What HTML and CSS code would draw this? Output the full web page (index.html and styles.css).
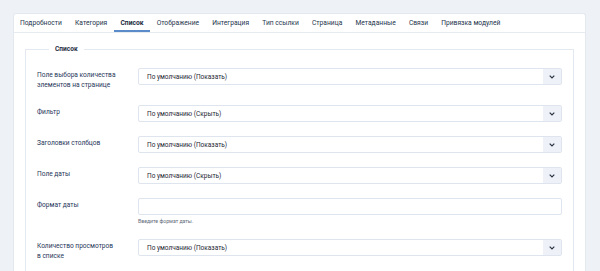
FILE: index.html
```html
<!DOCTYPE html>
<html lang="ru">
<head>
    <meta charset="UTF-8">
    <title>Список</title>
    <link rel="stylesheet" href="styles.css">
</head>
<body>
    <div class="panel">
        <ul class="tabs">
            <li>Подробности</li>
            <li>Категория</li>
            <li class="active">Список</li>
            <li>Отображение</li>
            <li>Интеграция</li>
            <li>Тип ссылки</li>
            <li>Страница</li>
            <li>Метаданные</li>
            <li>Связи</li>
            <li>Привязка модулей</li>
        </ul>
        <div class="tab-body">
            <fieldset class="group">
                <legend>Список</legend>
                <div class="row first">
                    <label class="lbl">Поле выбора количества<br>элементов на странице</label>
                    <div class="ctrl"><div class="select"><span>По умолчанию (Показать)</span><i class="caret"><svg width="6" height="4" viewBox="0 0 6 4"><path d="M0.7 0.7l2.3 2.3 2.3-2.3" fill="none" stroke="#2b3440" stroke-width="1.2"/></svg></i></div></div>
                </div>
                <div class="row">
                    <label class="lbl">Фильтр</label>
                    <div class="ctrl"><div class="select"><span>По умолчанию (Скрыть)</span><i class="caret"><svg width="6" height="4" viewBox="0 0 6 4"><path d="M0.7 0.7l2.3 2.3 2.3-2.3" fill="none" stroke="#2b3440" stroke-width="1.2"/></svg></i></div></div>
                </div>
                <div class="row">
                    <label class="lbl">Заголовки столбцов</label>
                    <div class="ctrl"><div class="select"><span>По умолчанию (Показать)</span><i class="caret"><svg width="6" height="4" viewBox="0 0 6 4"><path d="M0.7 0.7l2.3 2.3 2.3-2.3" fill="none" stroke="#2b3440" stroke-width="1.2"/></svg></i></div></div>
                </div>
                <div class="row">
                    <label class="lbl">Поле даты</label>
                    <div class="ctrl"><div class="select"><span>По умолчанию (Скрыть)</span><i class="caret"><svg width="6" height="4" viewBox="0 0 6 4"><path d="M0.7 0.7l2.3 2.3 2.3-2.3" fill="none" stroke="#2b3440" stroke-width="1.2"/></svg></i></div></div>
                </div>
                <div class="row">
                    <label class="lbl">Формат даты</label>
                    <div class="ctrl">
                        <div class="input"></div>
                        <small class="hint">Введите формат даты.</small>
                    </div>
                </div>
                <div class="row">
                    <label class="lbl">Количество просмотров<br>в списке</label>
                    <div class="ctrl"><div class="select"><span>По умолчанию (Показать)</span><i class="caret"><svg width="6" height="4" viewBox="0 0 6 4"><path d="M0.7 0.7l2.3 2.3 2.3-2.3" fill="none" stroke="#2b3440" stroke-width="1.2"/></svg></i></div></div>
                </div>
            </fieldset>
        </div>
    </div>
</body>
</html>
```

FILE: styles.css
```css
body { margin: 0; padding: 13px 14px 0 13px; background: #eef2f7; font-family: Roboto, "Liberation Sans", sans-serif; color: #22324a; height: 258px; overflow: hidden; }
.panel { background: #fff; border: 1px solid #e4e9f0; border-bottom: none; border-radius: 3px 3px 0 0; height: 260px; }
.tabs { list-style: none; margin: 0; padding: 0; display: flex; border-bottom: 1px solid #e6ebf1; height: 18px; }
.tabs li { font-size: 6.7px; line-height: 18px; padding: 0 6.6px; color: #24354d; }
.tabs li:first-child { padding-left: 6px; }
.tabs li.active { font-weight: 700; color: #1b2a3e; box-shadow: inset 0 -2px 0 #5b8cc9; }
.tab-body { padding: 11px 11px 0 11px; }
.group { margin: 0; border: 1px solid #e3e9f1; border-bottom: none; padding: 14px 11px 0 11px; }
.group legend { font-size: 6.6px; font-weight: 700; color: #1f2d42; padding: 0 6px; margin-left: 12px; line-height: 10px; }
.row { display: flex; margin-bottom: 14px; }
.row.first { margin-bottom: 15px; }
.lbl { width: 101px; flex: none; font-size: 6.6px; line-height: 10px; color: #1f3659; padding-top: 2px; }
.ctrl { flex: 1; }
.select, .input { height: 15px; border: 1px solid #dfe5ee; border-radius: 2px; display: flex; align-items: center; box-sizing: content-box; }
.select span { flex: 1; font-size: 6.5px; padding-left: 8px; color: #1d2633; }
.caret { width: 18px; height: 15px; background: #eef2f8; display: flex; align-items: center; justify-content: center; }
.hint { display: block; font-size: 5.2px; color: #5f6b7a; margin-top: 3px; line-height: 7px; }
```
